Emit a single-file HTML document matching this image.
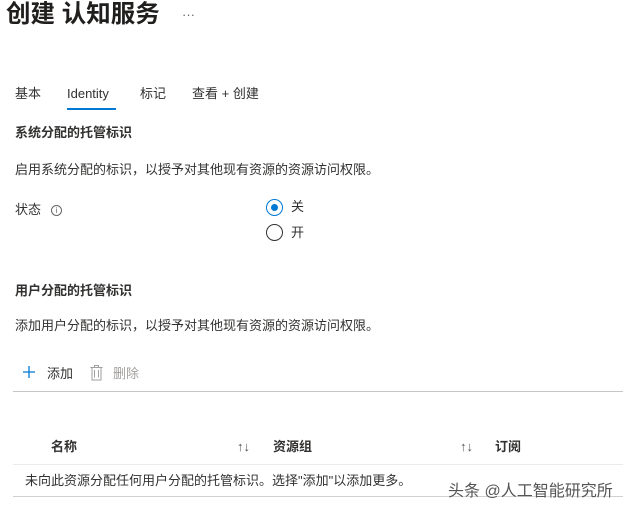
<!DOCTYPE html>
<html><head><meta charset="utf-8"><style>
body{margin:0;width:623px;height:516px;background:#fff;position:relative;overflow:hidden;font-family:"Liberation Sans","Noto Sans CJK SC",sans-serif;color:#323130;font-size:13px}
.a{position:absolute;white-space:nowrap;line-height:1}
.b{font-weight:bold}
</style></head><body>
<div class="a b" style="left:6px;top:3px;font-size:24.5px;color:#201f1e">创建 认知服务</div>
<div class="a" style="left:182px;top:8px;font-size:13px;color:#666">···</div>
<div class="a" style="left:15px;top:87px">基本</div>
<div class="a" style="left:67px;top:87px">Identity</div>
<div style="position:absolute;left:67px;top:108px;width:49px;height:2px;background:#0078d4"></div>
<div class="a" style="left:140px;top:87px">标记</div>
<div class="a" style="left:192px;top:87px">查看 + 创建</div>
<div class="a b" style="left:15px;top:126px">系统分配的托管标识</div>
<div class="a" style="left:15px;top:163px;font-size:13px">启用系统分配的标识，以授予对其他现有资源的资源访问权限。</div>
<div class="a" style="left:15px;top:203px">状态</div>
<div style="position:absolute;left:51px;top:205px;width:9px;height:9px;border:1px solid #666;border-radius:50%;font-size:8px;line-height:9px;text-align:center;color:#666">i</div>
<div style="position:absolute;left:266px;top:199px;width:15px;height:15px;border:1px solid #0078d4;border-radius:50%"></div>
<div style="position:absolute;left:271px;top:204px;width:7px;height:7px;background:#0078d4;border-radius:50%"></div>
<div class="a" style="left:291px;top:200px">关</div>
<div style="position:absolute;left:266px;top:224px;width:15px;height:15px;border:1px solid #323130;border-radius:50%"></div>
<div class="a" style="left:291px;top:226px">开</div>
<div class="a b" style="left:15px;top:284px">用户分配的托管标识</div>
<div class="a" style="left:15px;top:319px;font-size:13px">添加用户分配的标识，以授予对其他现有资源的资源访问权限。</div>
<svg style="position:absolute;left:23px;top:366px" width="12" height="12"><path d="M6 0V12M0 6H12" stroke="#0078d4" stroke-width="1.3"/></svg>
<div class="a" style="left:47px;top:367px">添加</div>
<svg style="position:absolute;left:90px;top:365px" width="13" height="16"><path d="M0.5 2.5H12.5M4.5 2.5V0.5H8.5V2.5M2 2.5V15H11V2.5M4.5 5V12.5M8.5 5V12.5" stroke="#a19f9d" fill="none"/></svg>
<div class="a" style="left:113px;top:367px;color:#a19f9d">删除</div>
<div style="position:absolute;left:13px;top:391px;width:610px;height:1px;background:#c8c6c4"></div>
<div class="a b" style="left:51px;top:440px">名称</div>
<div class="a" style="left:237px;top:440px;font-size:13px;color:#555">↑↓</div>
<div class="a b" style="left:273px;top:440px">资源组</div>
<div class="a" style="left:460px;top:440px;font-size:13px;color:#555">↑↓</div>
<div class="a b" style="left:495px;top:440px">订阅</div>
<div style="position:absolute;left:13px;top:464px;width:610px;height:1px;background:#edebe9"></div>
<div class="a" style="left:25px;top:474px;font-size:13px">未向此资源分配任何用户分配的托管标识。选择"添加"以添加更多。</div>
<div style="position:absolute;left:13px;top:496px;width:610px;height:1px;background:#d2d0ce"></div>
<div class="a" style="left:448px;top:484px;font-size:16px;color:#555;text-shadow:0 0 2px #fff">头条 @人工智能研究所</div>
</body></html>
